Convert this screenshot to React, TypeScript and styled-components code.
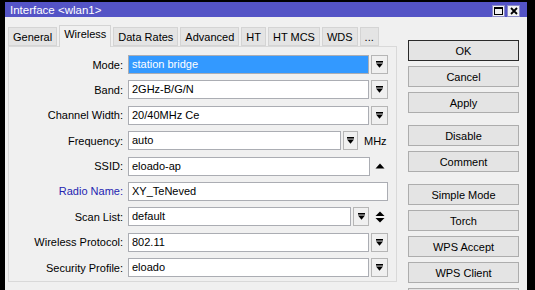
import React from 'react'
import styled, { createGlobalStyle } from 'styled-components'

const GlobalStyle = createGlobalStyle`
    html, body {
        margin: 0;
        height: 290px;
        overflow: hidden;
        background: #000;
        font-family: "Liberation Sans", Arial, sans-serif;
        font-size: 11px;
    }
`

const Window = styled.div`
    margin: 2px 0 0 5px;
    width: 522px;
    height: 300px;
    background: #f0f0f0;
    display: flex;
    flex-direction: column;
`

const TitleBar = styled.div`
    height: 20px;
    background: #5454c6;
    display: flex;
    align-items: center;
    padding: 0 7px 0 5px;
    color: #fff;
    font-size: 11.5px;
`

const TitleText = styled.span`
    flex: 1;
    padding-top: 1px;
`

const TitleBtn = styled.div`
    width: 13px;
    height: 12px;
    box-sizing: border-box;
    margin-left: 2px;
    margin-top: 3px;
    background: #f2f2f2;
    border: 1px solid #8c8cc8;
    display: flex;
    align-items: center;
    justify-content: center;
`

const Body = styled.div`
    display: flex;
    align-items: flex-start;
    padding: 0 8px 0 3px;
    gap: 11px;
`

const Left = styled.div`
    width: 389px;
    display: flex;
    flex-direction: column;
    padding-top: 8px;
`

const TabRow = styled.div`
    display: flex;
    align-items: flex-end;
    gap: 2px;
    height: 21px;
    position: relative;
    z-index: 1;
`

const Tab = styled.div<{ $active?: boolean }>`
    box-sizing: border-box;
    height: ${p => (p.$active ? '22px' : '19px')};
    margin-bottom: ${p => (p.$active ? '-1px' : '0')};
    padding: ${p => (p.$active ? '2px 4px 0' : '3px 4px 0')};
    background: ${p => (p.$active ? '#f0f0f0' : '#e4e4e4')};
    border: 1px solid #d4d4d4;
    border-bottom: ${p => (p.$active ? 'none' : '1px solid #d4d4d4')};
    color: #000;
    white-space: nowrap;
`

const Panel = styled.div`
    box-sizing: border-box;
    height: 236px;
    border: 1px solid #d9d9d9;
    padding-top: 8px;
    display: grid;
    grid-auto-rows: 19px;
    row-gap: 6.4px;
`

const Row = styled.div`
    display: flex;
    align-items: center;
    gap: 5px;
`

const Label = styled.span<{ $color?: string }>`
    width: 114px;
    text-align: right;
    color: ${p => p.$color || '#000'};
    white-space: nowrap;
`

const Controls = styled.div`
    width: 260px;
    height: 19px;
    display: flex;
    align-items: center;
    gap: 2px;
`

const Field = styled.div<{ $selected?: boolean }>`
    flex: 1;
    height: 19px;
    box-sizing: border-box;
    border: 1px solid #abadb3;
    background: ${p => (p.$selected ? '#3399ff' : '#fff')};
    color: ${p => (p.$selected ? '#fff' : '#000')};
    padding: 0 3px;
    line-height: 17px;
    white-space: nowrap;
    overflow: hidden;
`

const DropBtn = styled.div<{ $w?: number }>`
    width: ${p => p.$w || 17}px;
    height: 19px;
    box-sizing: border-box;
    border: 1px solid #b6b6b6;
    background: #f0f0f0;
    display: flex;
    align-items: center;
    justify-content: center;
    flex-shrink: 0;
`

const Unit = styled.span`
    margin-left: 4px;
    width: 24px;
`

const IconSlot = styled.div<{ $w?: number }>`
    width: ${p => p.$w || 16}px;
    height: 19px;
    display: flex;
    align-items: center;
    justify-content: center;
    flex-shrink: 0;
`

const Buttons = styled.div`
    width: 111px;
    margin-top: 23px;
    display: flex;
    flex-direction: column;
`

const Btn = styled.div<{ $default?: boolean; $gap?: number }>`
    height: 21px;
    box-sizing: border-box;
    margin-top: ${p => (p.$gap ?? 5)}px;
    border: 1px solid ${p => (p.$default ? '#2a2a2a' : '#adadad')};
    background: #e4e4e4;
    display: flex;
    align-items: center;
    justify-content: center;
    color: #000;
`

const DropIcon = () => (
    <svg width="9" height="9" viewBox="0 0 9 9">
        <rect x="1" y="1" width="7" height="1.6" fill="#000" />
        <polygon points="1,3.6 8,3.6 4.5,7.8" fill="#000" />
    </svg>
)

const UpIcon = () => (
    <svg width="10" height="6" viewBox="0 0 10 6">
        <polygon points="0.5,5.5 9.5,5.5 5,0.5" fill="#000" />
    </svg>
)

const UpDownIcon = () => (
    <svg width="10" height="12" viewBox="0 0 10 12">
        <polygon points="0.5,5 9.5,5 5,0.5" fill="#000" />
        <polygon points="0.5,7 9.5,7 5,11.5" fill="#000" />
    </svg>
)

const MaxIcon = () => (
    <svg width="9" height="8" viewBox="0 0 9 8">
        <rect x="0.5" y="0.5" width="8" height="7" fill="none" stroke="#000" />
        <rect x="0.5" y="0.5" width="8" height="1.5" fill="#000" />
    </svg>
)

const CloseIcon = () => (
    <svg width="8" height="8" viewBox="0 0 8 8">
        <path d="M1 1 L7 7 M7 1 L1 7" stroke="#000" strokeWidth="1.8" />
    </svg>
)

const tabs = ['General', 'Wireless', 'Data Rates', 'Advanced', 'HT', 'HT MCS', 'WDS', '...']

// last one only peeks in at the bottom edge, so no label shown
const buttons: { text: string; gap?: number; def?: boolean }[] = [
    { text: 'OK', gap: 0, def: true },
    { text: 'Cancel' },
    { text: 'Apply' },
    { text: 'Disable', gap: 12 },
    { text: 'Comment' },
    { text: 'Simple Mode', gap: 12 },
    { text: 'Torch' },
    { text: 'WPS Accept' },
    { text: 'WPS Client' },
    { text: '' },
]

export default function App() {
    return (
        <>
            <GlobalStyle />
            <Window>
                <TitleBar>
                    <TitleText>Interface &lt;wlan1&gt;</TitleText>
                    <TitleBtn><MaxIcon /></TitleBtn>
                    <TitleBtn><CloseIcon /></TitleBtn>
                </TitleBar>
                <Body>
                    <Left>
                        <TabRow>
                            {tabs.map(t => (
                                <Tab key={t} $active={t === 'Wireless'}>{t}</Tab>
                            ))}
                        </TabRow>
                        <Panel>
                            <Row>
                                <Label>Mode:</Label>
                                <Controls>
                                    <Field $selected>station bridge</Field>
                                    <DropBtn><DropIcon /></DropBtn>
                                </Controls>
                            </Row>
                            <Row>
                                <Label>Band:</Label>
                                <Controls>
                                    <Field>2GHz-B/G/N</Field>
                                    <DropBtn><DropIcon /></DropBtn>
                                </Controls>
                            </Row>
                            <Row>
                                <Label>Channel Width:</Label>
                                <Controls>
                                    <Field>20/40MHz Ce</Field>
                                    <DropBtn><DropIcon /></DropBtn>
                                </Controls>
                            </Row>
                            <Row>
                                <Label>Frequency:</Label>
                                <Controls>
                                    <Field>auto</Field>
                                    <DropBtn $w={15}><DropIcon /></DropBtn>
                                    <Unit>MHz</Unit>
                                </Controls>
                            </Row>
                            <Row>
                                <Label>SSID:</Label>
                                <Controls>
                                    <Field>eloado-ap</Field>
                                    <IconSlot><UpIcon /></IconSlot>
                                </Controls>
                            </Row>
                            <Row>
                                <Label $color="#2424b0">Radio Name:</Label>
                                <Controls>
                                    <Field>XY_TeNeved</Field>
                                </Controls>
                            </Row>
                            <Row>
                                <Label>Scan List:</Label>
                                <Controls>
                                    <Field>default</Field>
                                    <DropBtn $w={16}><DropIcon /></DropBtn>
                                    <IconSlot $w={17}><UpDownIcon /></IconSlot>
                                </Controls>
                            </Row>
                            <Row>
                                <Label>Wireless Protocol:</Label>
                                <Controls>
                                    <Field>802.11</Field>
                                    <DropBtn><DropIcon /></DropBtn>
                                </Controls>
                            </Row>
                            <Row>
                                <Label>Security Profile:</Label>
                                <Controls>
                                    <Field>eloado</Field>
                                    <DropBtn><DropIcon /></DropBtn>
                                </Controls>
                            </Row>
                        </Panel>
                    </Left>
                    <Buttons>
                        {buttons.map((b, i) => (
                            <Btn key={i} $gap={b.gap} $default={b.def}>{b.text}</Btn>
                        ))}
                    </Buttons>
                </Body>
            </Window>
        </>
    )
}
